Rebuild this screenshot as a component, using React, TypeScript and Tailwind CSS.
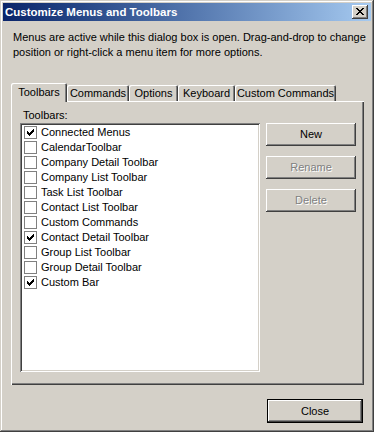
import React from "react";

const items: [string, boolean][] = [
  ["Connected Menus", true],
  ["CalendarToolbar", false],
  ["Company Detail Toolbar", false],
  ["Company List Toolbar", false],
  ["Task List Toolbar", false],
  ["Contact List Toolbar", false],
  ["Custom Commands", false],
  ["Contact Detail Toolbar", true],
  ["Group List Toolbar", false],
  ["Group Detail Toolbar", false],
  ["Custom Bar", true],
];

const checkRects: [number, number, number][] = [
  [0, 6, 6],
  [1, 5, 6],
  [2, 0, 0],
  [2, 4, 6],
  [3, 0, 1],
  [3, 3, 5],
  [4, 0, 4],
  [5, 1, 3],
  [6, 2, 2],
];

function CheckBox({ checked }: { checked: boolean }) {
  return (
    <div className="w-[13px] h-[13px] border border-[#808080] bg-white shrink-0 relative">
      {checked && (
        <svg width="11" height="11" viewBox="0 0 11 11" shapeRendering="crispEdges" className="absolute left-0 top-0">
          {checkRects.map(([r, a, b], i) => (
            <rect key={i} x={2 + a} y={2 + r} width={b - a + 1} height={1} fill="#000" />
          ))}
        </svg>
      )}
    </div>
  );
}

const xRows: [number, number, number][] = [
  [0, 0, 1], [0, 6, 7],
  [1, 1, 2], [1, 5, 6],
  [2, 2, 5],
  [3, 3, 4],
  [4, 2, 5],
  [5, 1, 2], [5, 5, 6],
  [6, 0, 1], [6, 6, 7],
];

function Tab({ label, w, selected }: { label: string; w: string; selected?: boolean }) {
  if (selected) {
    return (
      <div
        className={`${w} h-[19px] -mb-[1px] relative z-10 bg-[#d4d0c8] rounded-tl-[2px] rounded-tr-[2px] shadow-[inset_1px_1px_#fff,inset_-1px_0_#404040,inset_-2px_0_#808080] flex justify-center pt-[2px] leading-[15px] shrink-0`}
      >
        {label}
      </div>
    );
  }
  return (
    <div
      className={`${w} h-[16px] bg-[#d4d0c8] rounded-tl-[2px] rounded-tr-[2px] shadow-[inset_1px_1px_#fff,inset_-1px_0_#404040,inset_-2px_0_#808080] flex justify-center leading-[15px] pt-[1px] shrink-0 whitespace-nowrap`}
    >
      {label}
    </div>
  );
}

function Btn({ label, disabled }: { label: string; disabled?: boolean }) {
  return (
    <div
      className={`w-[90px] h-[23px] flex items-center justify-center bg-[#d4d0c8] shadow-[inset_-1px_-1px_#404040,inset_1px_1px_#fff,inset_-2px_-2px_#808080,inset_2px_2px_#d4d0c8] ${
        disabled ? "text-[#808080] [text-shadow:1px_1px_0_#fff]" : "text-black"
      }`}
    >
      {label}
    </div>
  );
}

export default function App() {
  return (
    <div className="w-[374px] h-[432px] bg-[#d4d0c8] p-[3px] flex flex-col font-['Liberation_Sans',Arial,sans-serif] text-[11px] text-black shadow-[inset_-1px_-1px_#404040,inset_1px_1px_#d4d0c8,inset_-2px_-2px_#808080,inset_2px_2px_#fff] overflow-hidden select-none">
      {/* Title bar */}
      <div className="h-[18px] flex items-center pl-[2px] pr-[3px] bg-linear-to-r from-[#0a246a] to-[#a6caf0] shrink-0">
        <span className="text-white font-bold text-[11.5px] leading-[14px]">Customize Menus and Toolbars</span>
        <div className="ml-auto w-[16px] h-[14px] bg-[#d4d0c8] shadow-[inset_-1px_-1px_#404040,inset_1px_1px_#fff,inset_-2px_-2px_#808080,inset_2px_2px_#d4d0c8] relative">
          <svg width="8" height="7" viewBox="0 0 8 7" shapeRendering="crispEdges" className="absolute left-[4px] top-[3px]">
            {xRows.map(([r, a, b], i) => (
              <rect key={i} x={a} y={r} width={b - a + 1} height={1} fill="#000" />
            ))}
          </svg>
        </div>
      </div>

      {/* Description */}
      <div className="mt-[9px] pl-[10px] leading-[15px] whitespace-nowrap">
        Menus are active while this dialog box is open. Drag-and-drop to change
        <br />
        position or right-click a menu item for more options.
      </div>

      {/* Tabs */}
      <div className="mt-[23px] ml-[8px] h-[18px] flex items-end">
        <Tab label="Toolbars" w="w-[56px]" selected />
        <Tab label="Commands" w="w-[62px]" />
        <Tab label="Options" w="w-[49px]" />
        <Tab label="Keyboard" w="w-[57px]" />
        <Tab label="Custom Commands" w="w-[101px]" />
      </div>

      {/* Panel */}
      <div className="ml-[8px] w-[353px] h-[284px] shrink-0 shadow-[inset_1px_1px_#fff,inset_-1px_-1px_#404040,inset_-2px_-2px_#808080] pt-[7px] pl-[9px]">
        <div className="ml-[3px] leading-[15px]">Toolbars:</div>
        <div className="flex gap-[6px]">
          <div className="w-[240px] h-[249px] bg-white shadow-[inset_1px_1px_#808080,inset_-1px_-1px_#fff,inset_2px_2px_#404040,inset_-2px_-2px_#d4d0c8] pt-[2px] pl-[2px]">
            {items.map(([name, checked]) => (
              <div key={name} className="h-[15px] flex items-center pl-[2px]">
                <CheckBox checked={checked} />
                <span className="ml-[4px] leading-[15px] whitespace-nowrap">{name}</span>
              </div>
            ))}
          </div>
          <div className="flex flex-col gap-[10px]">
            <Btn label="New" />
            <Btn label="Rename" disabled />
            <Btn label="Delete" disabled />
          </div>
        </div>
      </div>

      {/* Footer */}
      <div className="mt-[14px] flex justify-end pr-[8px]">
        <div className="w-[96px] h-[24px] border border-black flex items-center justify-center bg-[#d4d0c8] shadow-[inset_-1px_-1px_#404040,inset_1px_1px_#fff,inset_-2px_-2px_#808080,inset_2px_2px_#d4d0c8]">
          Close
        </div>
      </div>
    </div>
  );
}
